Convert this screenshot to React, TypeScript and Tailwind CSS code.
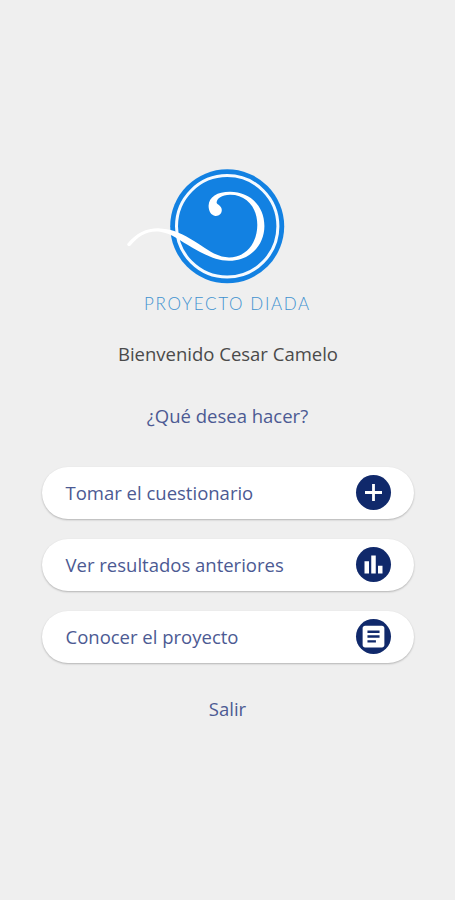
import { MdArticle, MdBarChart } from "react-icons/md";

function IconoMas() {
  return (
    <svg width="17" height="17" viewBox="0 0 17 17" fill="none" stroke="currentColor" strokeWidth="2.8">
      <path d="M8.5 0v17M0 8.5h17" />
    </svg>
  );
}

const opciones = [
  { texto: "Tomar el cuestionario", icono: <IconoMas /> },
  { texto: "Ver resultados anteriores", icono: <MdBarChart size={27} /> },
  { texto: "Conocer el proyecto", icono: <MdArticle size={29} /> },
];

function Logo() {
  return (
    <svg className="block" width="160" height="116" viewBox="126 168 160 116">
      <circle cx="227.2" cy="226.3" r="57" fill="#1281e2" />
      <circle cx="227.2" cy="226.3" r="50.7" fill="none" stroke="#f5faff" strokeWidth="3" />
      <path
        d="M127.6 243.6 C137 232.5 147 227.9 160 228.4 C174 229 184 234.7 194 241 C207 249.2 216 257 229 257.4 C246 257.5 257.3 243 257.3 225 C257.3 207 246 194.6 230 194.8 C221.5 195 217 198.5 216.6 202.5 C216.5 204.6 221.8 205.5 221.8 210 C221.8 214 218.8 216.2 215.3 215.9 C211 215.5 208.4 210.8 208.6 205.5 C209 197 217 191.8 230 191.8 C250 191.8 264.4 206 264.4 226 C264.4 246 249 261 229 260.8 C214 260.5 203 253.3 192 247.4 C181 241.5 172 233.4 160 231.8 C147 230.4 138.5 236.3 130.5 245.5 C129 247 126.2 245.4 127.6 243.6 Z"
        fill="#ffffff"
      />
    </svg>
  );
}

export default function App() {
  return (
    <div className="flex h-[900px] w-full flex-col items-center bg-[#efefef] pt-[168px] font-['Open_Sans',sans-serif] text-[18.5px] leading-[26px] text-[#4c5a93]">
      <div className="mr-[43px]">
        <Logo />
      </div>
      <h1 className="mt-[8px] whitespace-nowrap font-['Lato',sans-serif] text-[17px] font-light leading-[24px] tracking-[1.65px] text-[#3f92cf]">
        PROYECTO DIADA
      </h1>
      <p className="mt-[25px] whitespace-nowrap pl-px text-[#4a4a4a]">Bienvenido Cesar Camelo</p>
      <p className="mt-[36px] whitespace-nowrap">¿Qué desea hacer?</p>
      <div className="mt-[38px] flex w-[372px] flex-col gap-5">
        {opciones.map((opcion) => (
          <button
            key={opcion.texto}
            className="flex h-[52px] items-center justify-between rounded-full bg-white pb-px pl-6 pr-[23px] shadow-[0_1px_2px_rgba(0,0,0,0.25)]"
          >
            <span className="whitespace-nowrap">{opcion.texto}</span>
            <span className="flex size-[35px] items-center justify-center rounded-full bg-[#10296b] text-white">
              {opcion.icono}
            </span>
          </button>
        ))}
      </div>
      <button className="mt-[33px]">Salir</button>
    </div>
  );
}
